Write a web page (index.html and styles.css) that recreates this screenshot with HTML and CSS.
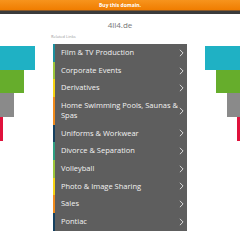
FILE: index.html
```html
<!DOCTYPE html>
<html>
<head>
<meta charset="utf-8">
<link rel="stylesheet" href="styles.css">
</head>
<body>
<div class="topbar">Buy this domain.</div>
<div class="darkbar"></div>
<div class="title">4ll4.de</div>
<div class="stage">
  <div class="deco deco-left">
    <div class="bar teal w35"></div>
    <div class="bar green w24"></div>
    <div class="bar gray w14"></div>
    <div class="bar red w3"></div>
  </div>
  <div class="main">
    <div class="related">Related Links</div>
    <ul class="links">
      <li class="c1">Film &amp; TV Production<svg class="chev" viewBox="0 0 6 10"><polyline points="1,1 5,5 1,9"/></svg></li>
      <li class="c2">Corporate Events<svg class="chev" viewBox="0 0 6 10"><polyline points="1,1 5,5 1,9"/></svg></li>
      <li class="c3">Derivatives<svg class="chev" viewBox="0 0 6 10"><polyline points="1,1 5,5 1,9"/></svg></li>
      <li class="c4">Home Swimming Pools, Saunas &amp; Spas<svg class="chev" viewBox="0 0 6 10"><polyline points="1,1 5,5 1,9"/></svg></li>
      <li class="c5">Uniforms &amp; Workwear<svg class="chev" viewBox="0 0 6 10"><polyline points="1,1 5,5 1,9"/></svg></li>
      <li class="c6">Divorce &amp; Separation<svg class="chev" viewBox="0 0 6 10"><polyline points="1,1 5,5 1,9"/></svg></li>
      <li class="c2">Volleyball<svg class="chev" viewBox="0 0 6 10"><polyline points="1,1 5,5 1,9"/></svg></li>
      <li class="c3">Photo &amp; Image Sharing<svg class="chev" viewBox="0 0 6 10"><polyline points="1,1 5,5 1,9"/></svg></li>
      <li class="c4">Sales<svg class="chev" viewBox="0 0 6 10"><polyline points="1,1 5,5 1,9"/></svg></li>
      <li class="c5">Pontiac<svg class="chev" viewBox="0 0 6 10"><polyline points="1,1 5,5 1,9"/></svg></li>
    </ul>
  </div>
  <div class="deco deco-right">
    <div class="bar teal w35"></div>
    <div class="bar green w24"></div>
    <div class="bar gray w13"></div>
    <div class="bar red w3"></div>
  </div>
</div>
</body>
</html>
```
FILE: styles.css
```css
html, body {
  margin: 0;
  padding: 0;
  background: #fff;
  font-family: "Open Sans", "Liberation Sans", sans-serif;
  overflow: hidden;
}
.topbar {
  height: 10px;
  background: linear-gradient(#f7941d, #f07d00);
  color: #fff;
  font-size: 5px;
  font-weight: bold;
  line-height: 10px;
  text-align: center;
}
.darkbar {
  height: 4px;
  background: #3b3b3b;
  border-top: 1px solid #8a5a2a;
  box-sizing: border-box;
}
.title {
  height: 20px;
  line-height: 22px;
  text-align: center;
  font-size: 8px;
  color: #777;
}
.stage {
  display: flex;
}
.deco {
  flex: 1;
  display: flex;
  flex-direction: column;
  padding-top: 12px;
}
.deco-left { align-items: flex-start; }
.deco-right { align-items: flex-end; }
.bar { height: 23.7px; }
.teal { background: #1fb1c4; }
.green { background: #66ad2c; }
.gray { background: #8a8a8a; }
.red { background: #e0123c; }
.w35 { width: 35px; }
.w24 { width: 24px; }
.w14 { width: 14px; }
.w13 { width: 13px; }
.w3 { width: 3px; }
.main {
  width: 134px;
}
.related {
  font-size: 4px;
  color: #999;
  height: 10px;
  line-height: 6px;
  margin-left: -2px;
}
.links {
  list-style: none;
  margin: 0;
  padding: 0;
  background: #5e5e5e;
}
.links li {
  position: relative;
  border-left: 2px solid #1fb1c4;
  padding: 4px 8px 4px 6px;
  font-size: 7.5px;
  line-height: 9.7px;
  color: #f2f2f2;
}
.links li.c1 { border-color: #1c8f9e; }
.links li.c2 { border-color: #9cc53a; }
.links li.c3 { border-color: #f5d213; }
.links li.c4 { border-color: #f08a1c; }
.links li.c5 { border-color: #15405f; }
.links li.c6 { border-color: #2f9f82; }
.chev {
  position: absolute;
  right: 3px;
  top: 50%;
  width: 5px;
  height: 8px;
  margin-top: -4px;
  fill: none;
  stroke: #ddd;
  stroke-width: 1.2;
}
```
